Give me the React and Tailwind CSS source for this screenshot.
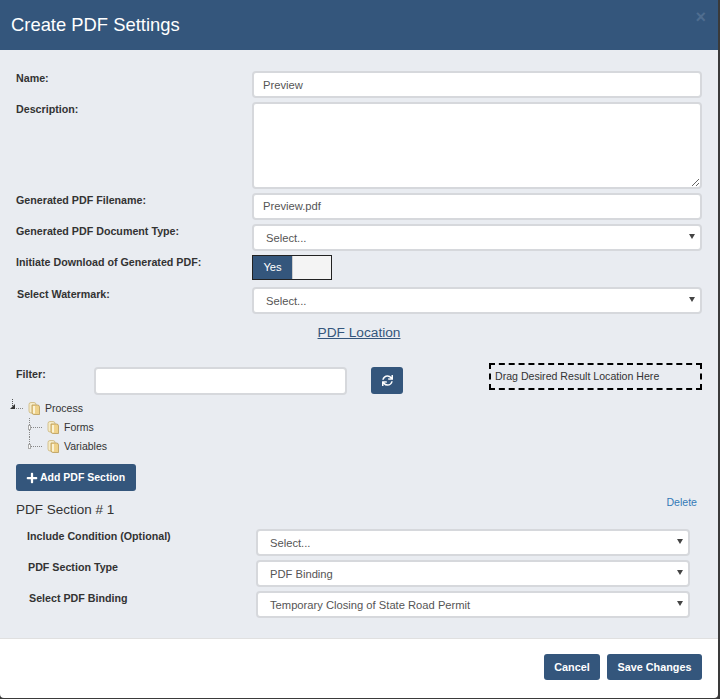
import { FaPlus, FaSync } from "react-icons/fa";

const inputCls = "block w-full h-[27px] bg-white border-2 border-[#d6d8dc] rounded-[4px] px-[9px] text-[11.2px] text-[#555] outline-none";

function Label({ children, className = "" }) {
  return <label className={"block font-bold text-[10.7px] leading-[15px] text-[#333] " + className}>{children}</label>;
}

function SelectBox({ value }) {
  return (
    <div className="relative flex items-center w-full h-[27px] bg-white border-2 border-[#d6d8dc] rounded-[4px] pl-[12px] pt-[2px] text-[11.2px] text-[#555]">
      {value}
      <span className="absolute right-[5px] top-[8px] w-0 h-0 border-l-[3px] border-r-[3px] border-t-[5px] border-l-transparent border-r-transparent border-t-[#444]" />
    </div>
  );
}

function Folder() {
  return (
    <svg width="12" height="13" viewBox="0 0 12 13" className="shrink-0">
      <path d="M1 2.5 Q1 .5 3 .5 H6 Q8 .5 8 2.5 V11 H3 Q1 11 1 9 Z" fill="#f6ecc8" stroke="#cdb67c" strokeWidth="0.8" />
      <path d="M4 3 H9.5 Q11.5 3 11.5 5 V12.5 H6 Q4 12.5 4 10.5 Z" fill="#efd28a" stroke="#b99a58" strokeWidth="0.8" />
      <rect x="5" y="4" width="2" height="7.5" fill="#fbf3d6" />
    </svg>
  );
}

function TreeLine({ last }) {
  return (
    <span className="relative block w-[18px] h-[19px] shrink-0">
      <span className={"absolute left-0 top-0 border-l border-dotted border-[#888] " + (last ? "h-[9px]" : "h-[19px]")} />
      <span className="absolute left-0 top-[9px] w-[13px] border-t border-dotted border-[#888]" />
      <span className="absolute left-[-1px] top-[7px] w-[3px] h-[5px] border border-[#aaa] bg-white" />
    </span>
  );
}

export default function App() {
  return (
    <div className="w-[720px] h-[699px] bg-[#3a3a3a] font-['Liberation_Sans',Arial,sans-serif]">
      <div className="w-[718px] h-[698px] flex flex-col bg-white rounded-b-[4px] overflow-hidden">
        {/* header */}
        <div className="relative h-[50px] bg-[#34567c] flex items-center pl-[11px] shrink-0">
          <h4 className="text-[18.4px] text-white">Create PDF Settings</h4>
          <span className="absolute right-[12px] top-[7px] text-[18px] leading-[20px] font-bold text-[#4f6d8f]">×</span>
        </div>

        {/* body */}
        <div className="h-[589px] bg-[#e9ecf1] border-b border-[#e0e0e0] pt-[21px] pl-[16px] pr-[16px] shrink-0">
          <div className="flex">
            <Label className="w-[236px] shrink-0">Name:</Label>
            <input className={inputCls} defaultValue="Preview" />
          </div>
          <div className="flex mt-[4px]">
            <Label className="w-[236px] shrink-0">Description:</Label>
            <textarea className="block w-full h-[87px] bg-white border-2 border-[#d6d8dc] rounded-[4px] outline-none" />
          </div>
          <div className="flex mt-[4px]">
            <Label className="w-[236px] shrink-0">Generated PDF Filename:</Label>
            <input className={inputCls + " pb-[2px]"} defaultValue="Preview.pdf" />
          </div>
          <div className="flex mt-[4px]">
            <Label className="w-[236px] shrink-0">Generated PDF Document Type:</Label>
            <SelectBox value="Select..." />
          </div>
          <div className="flex mt-[4px]">
            <Label className="w-[236px] shrink-0">Initiate Download of Generated PDF:</Label>
            <div className="flex w-[80px] h-[25px] border border-[#222] bg-[#f4f4f4]">
              <div className="w-[40px] bg-[#34567c] text-white text-[11.2px] flex items-center justify-center border-r border-[#ccc]">Yes</div>
            </div>
          </div>
          <div className="flex mt-[7px]">
            <Label className="w-[236px] shrink-0 pl-px">Select Watermark:</Label>
            <SelectBox value="Select..." />
          </div>

          <div className="flex justify-center mt-[10px]">
            <span className="text-[13.7px] leading-[18px] text-[#34567c] underline">PDF Location</span>
          </div>

          <div className="flex mt-[21px]">
            <Label className="w-[78px] shrink-0 mt-[4px]">Filter:</Label>
            <input className="block w-[253px] h-[28px] mt-[4px] bg-white border-2 border-[#d6d8dc] rounded-[4px] outline-none shrink-0" />
            <button className="flex items-center justify-center w-[32px] h-[27px] mt-[4px] ml-[24px] bg-[#34567c] rounded-[3px] text-white shrink-0">
              <FaSync size={11} />
            </button>
            <div className="w-[213px] h-[27px] ml-[86px] border-2 border-dashed border-black pl-[4px] flex items-center text-[10.6px] text-[#333] whitespace-nowrap shrink-0">
              Drag Desired Result Location Here
            </div>
          </div>

          <div className="mt-[4px] -ml-[6px] text-[10.5px] text-[#333]">
            <div className="flex items-center h-[19px]">
              <span className="relative block w-[18px] h-[19px] shrink-0">
                <span className="absolute left-[2px] top-0 h-[9px] border-l border-dotted border-[#555]" />
                <span className="absolute left-0 top-[5px] w-0 h-0 border-b-[5px] border-l-[5px] border-b-[#333] border-l-transparent" />
                <span className="absolute left-[6px] top-[9px] w-[7px] border-t border-dotted border-[#888]" />
              </span>
              <Folder />
              <span className="ml-[5px]">Process</span>
            </div>
            <div className="flex items-center h-[19px] pl-[19px]">
              <TreeLine />
              <Folder />
              <span className="ml-[5px]">Forms</span>
            </div>
            <div className="flex items-center h-[19px] pl-[19px]">
              <TreeLine last />
              <Folder />
              <span className="ml-[5px]">Variables</span>
            </div>
          </div>

          <button className="flex items-center w-[120px] h-[27px] mt-[8px] bg-[#34567c] rounded-[3px] text-white text-[10.5px] font-bold pl-[10px]">
            <FaPlus size={12} className="mr-[2px]" />
            Add PDF Section
          </button>

          <div className="flex justify-between">
            <div className="text-[13.5px] leading-[18px] text-[#333] mt-[10px]">PDF Section # 1</div>
            <a className="text-[10.6px] leading-[14px] text-[#337ab7] mt-[4px] mr-[5px]">Delete</a>
          </div>

          <div className="mt-[10px] pr-[12px]">
            <div className="flex">
              <Label className="w-[240px] shrink-0 pl-[11px]">Include Condition (Optional)</Label>
              <SelectBox value="Select..." />
            </div>
            <div className="flex mt-[4px]">
              <Label className="w-[240px] shrink-0 pl-[12px]">PDF Section Type</Label>
              <SelectBox value="PDF Binding" />
            </div>
            <div className="flex mt-[4px]">
              <Label className="w-[240px] shrink-0 pl-[13px]">Select PDF Binding</Label>
              <SelectBox value="Temporary Closing of State Road Permit" />
            </div>
          </div>
        </div>

        {/* footer */}
        <div className="flex justify-end gap-[7px] pt-[15px] pr-[16px]">
          <button className="w-[56px] h-[26px] bg-[#34567c] rounded-[3px] text-white text-[10.8px] font-bold">Cancel</button>
          <button className="w-[95px] h-[26px] bg-[#34567c] rounded-[3px] text-white text-[10.8px] font-bold">Save Changes</button>
        </div>
      </div>
    </div>
  );
}
